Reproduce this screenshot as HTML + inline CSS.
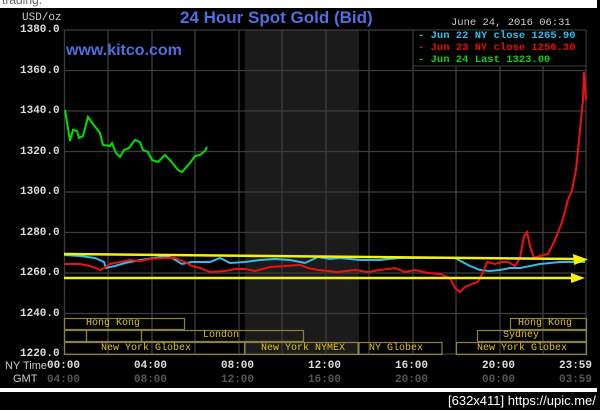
<!DOCTYPE html>
<html><head><style>
html,body{margin:0;padding:0;background:#000;width:600px;height:410px;overflow:hidden;font-family:"Liberation Mono",monospace}
.t{position:absolute;white-space:nowrap}
</style></head><body>
<div style="position:absolute;left:0;top:0;width:600px;height:410px;background:#000"></div>
<div style="position:absolute;left:0;top:0;width:597px;height:8px;background:#fff;overflow:hidden"><div style="font:12px 'Liberation Sans',sans-serif;color:#666;margin-top:-7px;margin-left:2px">trading.</div></div>
<div style="position:absolute;left:0;top:388px;width:597px;height:4px;background:#fff"></div>
<svg style="position:absolute;left:0;top:0" width="600" height="410">
<rect x="245" y="30" width="114" height="325" fill="#1b1b1b"/>
<g stroke="#3c3c3c" stroke-width="1.3">
<line x1="64" y1="30" x2="586" y2="30"/><line x1="64" y1="70.5" x2="586" y2="70.5"/><line x1="64" y1="111" x2="586" y2="111"/><line x1="64" y1="151.5" x2="586" y2="151.5"/><line x1="64" y1="192" x2="586" y2="192"/><line x1="64" y1="232.5" x2="586" y2="232.5"/><line x1="64" y1="273" x2="586" y2="273"/><line x1="64" y1="313.5" x2="586" y2="313.5"/><line x1="64" y1="354" x2="586" y2="354"/>
<line x1="64.5" y1="30" x2="64.5" y2="355"/><line x1="108" y1="30" x2="108" y2="355"/><line x1="152" y1="30" x2="152" y2="355"/><line x1="195" y1="30" x2="195" y2="355"/><line x1="239" y1="30" x2="239" y2="355"/><line x1="282" y1="30" x2="282" y2="355"/><line x1="326" y1="30" x2="326" y2="355"/><line x1="369" y1="30" x2="369" y2="355"/><line x1="413" y1="30" x2="413" y2="355"/><line x1="456" y1="30" x2="456" y2="355"/><line x1="500" y1="30" x2="500" y2="355"/><line x1="543" y1="30" x2="543" y2="355"/><line x1="586" y1="30" x2="586" y2="355"/>
</g>
<rect x="413" y="30" width="173" height="36" fill="#000" stroke="#3c3c3c"/>
<g fill="none" stroke="#8a8040" stroke-width="1.2">
<rect x="64.5" y="318.5" width="120" height="11"/>
<rect x="64.5" y="330.5" width="22" height="11"/><rect x="86.5" y="330.5" width="55" height="11"/><rect x="141.5" y="330.5" width="162" height="11"/>
<rect x="64.5" y="342.5" width="180" height="12"/><rect x="245" y="342.5" width="113" height="12"/><rect x="359" y="342.5" width="83" height="12"/><rect x="456.5" y="342.5" width="130" height="12"/>
<rect x="510.5" y="318.5" width="76" height="11"/><rect x="477.5" y="330.5" width="109" height="11"/>
</g>
<polyline fill="none" stroke="#00e000" stroke-width="2" points="65,110 70,141 73,130 77,131 79,138 83,136 88,117 93,124 100,133 103,145 110,146 112,143 116,153 120,157 124,150 129,148 135,140 140,142 143,150 148,152 150,156 152,160 158,162 162,158 165,155 170,160 178,170 182,172 190,163 195,156 200,155 205,151 207,147"/>
<polyline fill="none" stroke="#33bbee" stroke-width="2" points="64,255 80,256 95,258 104,262 106,268 115,266 125,263 140,260 155,258 165,256 172,258 182,264 192,262 210,262 220,258 230,263 245,262 260,260 275,259 290,260 305,263 318,257 330,259 340,258 360,260 380,260 400,258 420,258 440,258 455,258 470,266 480,270 490,271 500,270 510,268 520,268 530,266 540,264 550,263 560,262 570,262 585,262"/>
<polyline fill="none" stroke="#ee1111" stroke-width="2" points="64,264 80,264 90,266 96,268 100,270 104,268 110,264 120,262 130,260 140,261 150,259 165,258 175,258 185,262 192,266 200,268 210,272 225,271 235,269 245,269 255,271 270,267 285,266 300,265 308,268 318,270 328,271 338,272 355,270 368,272 380,270 395,268 405,272 415,270 428,273 440,274 450,278 455,288 460,292 465,287 472,284 478,282 483,272 487,262 495,264 502,262 508,262 515,266 520,258 524,236 527,232 530,246 534,258 540,256 548,254 555,240 562,222 568,200 572,190 576,170 580,130 583,100 584,72 585,85 586,100"/>
<g stroke="#f2f20a" stroke-width="2.5" fill="#f2f20a">
<line x1="64" y1="254" x2="576" y2="259"/><polygon points="588,259.5 573,254 574,265" stroke="none"/>
<line x1="64" y1="278" x2="574" y2="278"/><polygon points="585,278 571,273 571,283" stroke="none"/>
</g>
</svg>
<div class="t" style="left:22px;top:12px;font-size:11px;color:#ccc">USD/oz</div>
<div class="t" style="left:180px;top:8px;font:bold 17px 'Liberation Sans',sans-serif;color:#4f6fe0">24 Hour Spot Gold (Bid)</div>
<div class="t" style="left:66px;top:42px;font:bold 16px 'Liberation Sans',sans-serif;color:#4f6fe0">www.kitco.com</div>
<div class="t" style="left:451px;top:17px;font-size:10.5px;color:#ccc">June 24, 2016 06:31</div>
<div class="t" style="left:418px;top:30px;font-size:10.5px;line-height:12px;color:#2ac0f0;font-weight:bold">- Jun 22 NY close 1265.90<br><span style="color:#e01010">- Jun 23 NY close 1256.30</span><br><span style="color:#10d010">- Jun 24 Last 1323.00</span></div>
<div class="t" style="left:20px;top:10px;font-size:11px;line-height:40.5px;color:#ddd;font-weight:bold">1380.0<br>1360.0<br>1340.0<br>1320.0<br>1300.0<br>1280.0<br>1260.0<br>1240.0<br>1220.0</div>
<div style="font-size:10px;color:#e0c020">
<div class="t" style="left:86px;top:318px">Hong Kong</div>
<div class="t" style="left:203px;top:330px">London</div>
<div class="t" style="left:101px;top:343px">New York Globex</div>
<div class="t" style="left:261px;top:343px">New York NYMEX</div>
<div class="t" style="left:369px;top:343px">NY Globex</div>
<div class="t" style="left:477px;top:343px">New York Globex</div>
<div class="t" style="left:518px;top:318px">Hong Kong</div>
<div class="t" style="left:503px;top:330px">Sydney</div>
</div>
<div class="t" style="left:5px;top:360px;font:11px 'Liberation Sans',sans-serif;color:#ccc">NY Time</div>
<div class="t" style="left:13px;top:373px;font:11px 'Liberation Sans',sans-serif;color:#ccc">GMT</div>
<div style="font-size:11px;font-weight:bold">
<div class="t" style="left:47px;top:360px;color:#ddd">00:00</div><div class="t" style="left:47px;top:374px;color:#555">04:00</div>
<div class="t" style="left:134px;top:360px;color:#ddd">04:00</div><div class="t" style="left:134px;top:374px;color:#555">08:00</div>
<div class="t" style="left:221px;top:360px;color:#ddd">08:00</div><div class="t" style="left:221px;top:374px;color:#555">12:00</div>
<div class="t" style="left:308px;top:360px;color:#ddd">12:00</div><div class="t" style="left:308px;top:374px;color:#555">16:00</div>
<div class="t" style="left:395px;top:360px;color:#ddd">16:00</div><div class="t" style="left:395px;top:374px;color:#555">20:00</div>
<div class="t" style="left:482px;top:360px;color:#ddd">20:00</div><div class="t" style="left:482px;top:374px;color:#555">00:00</div>
<div class="t" style="left:559px;top:360px;color:#ddd">23:59</div><div class="t" style="left:559px;top:374px;color:#555">03:59</div>
</div>
<div style="position:absolute;left:0;top:392px;width:600px;height:18px;background:#000;z-index:5"></div>
<div class="t" style="left:448px;top:393px;font:13px 'Liberation Sans',sans-serif;color:#fff;z-index:6">[632x411] https://upic.me/</div>
</body></html>
